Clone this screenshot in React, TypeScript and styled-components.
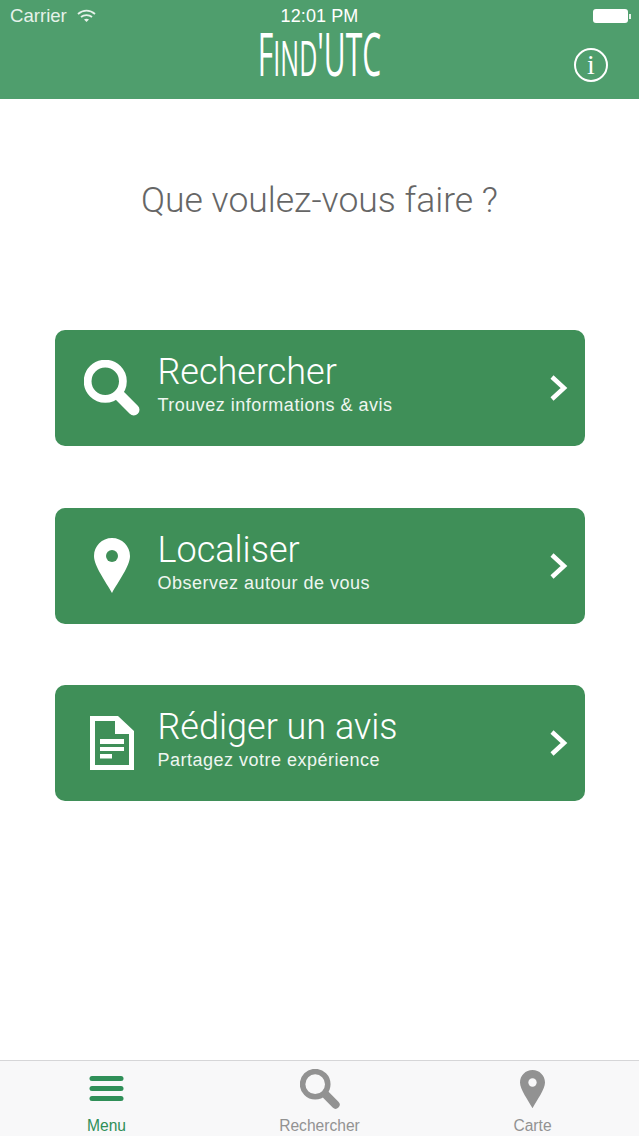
import React from 'react';
import styled, { createGlobalStyle } from 'styled-components';

const GlobalStyle = createGlobalStyle`
  html, body {
    margin: 0;
    padding: 0;
    background: #fff;
    font-family: 'Liberation Sans', Arial, sans-serif;
  }
`;

const Page = styled.div`
  width: 639px;
  height: 1136px;
  display: flex;
  flex-direction: column;
  overflow: hidden;
  background: #fff;
`;

const Header = styled.header`
  height: 99px;
  padding: 0 9px;
  box-sizing: border-box;
  background: #4f9e6d;
  color: #fff;
  position: relative;
`;

const StatusBar = styled.div`
  height: 32px;
  display: grid;
  grid-template-columns: 1fr auto 1fr;
  align-items: center;
`;

const Carrier = styled.div`
  display: flex;
  align-items: center;
  gap: 10px;
  margin-left: 1px;
  color: #e6f2ea;
  font-size: 18.6px;
`;

const Clock = styled.div`
  font-size: 18px;
  letter-spacing: 0.1px;
`;

const Battery = styled.div`
  justify-self: end;
  display: flex;
  align-items: center;
  gap: 1px;
  margin-right: -1px;
`;

const BatteryBody = styled.div`
  width: 35px;
  height: 14px;
  background: #fff;
  border-radius: 3px;
`;

const BatteryTip = styled.div`
  width: 2px;
  height: 5px;
  background: #e6f2ea;
`;

const Logo = styled.div`
  position: absolute;
  left: 0;
  right: 0;
  top: 31px;
  text-align: center;
  font-family: 'Open Sans', sans-serif;
  font-weight: 400;
  font-size: 60px;
  line-height: 44px;
  white-space: nowrap;
  transform: scaleX(0.5);
`;

const LogoSmall = styled.span`
  font-size: 50px;
`;

const InfoButton = styled.div`
  position: absolute;
  right: 31px;
  top: 48px;
  width: 34px;
  height: 34px;
  box-sizing: border-box;
  border: 2px solid #fff;
  border-radius: 50%;
  display: flex;
  align-items: center;
  justify-content: center;
  font-family: 'Liberation Serif', serif;
  font-size: 28px;
`;

const Main = styled.main`
  flex: 1;
  display: flex;
  flex-direction: column;
  align-items: center;
`;

const Question = styled.h1`
  margin: 81px 0 109px;
  height: 41px;
  font-family: Roboto, 'Liberation Sans', sans-serif;
  font-weight: 300;
  font-size: 35.5px;
  line-height: 41px;
  color: #666;
`;

const Buttons = styled.div`
  display: flex;
  flex-direction: column;
  gap: 61.5px;
`;

const MenuButton = styled.div`
  width: 530px;
  height: 116px;
  box-sizing: border-box;
  display: flex;
  align-items: center;
  background: #3f8f58;
  border-radius: 10px;
  color: #fff;
  padding-right: 16px;
`;

const ButtonIcon = styled.div`
  width: 103px;
  flex: none;
  display: flex;
  justify-content: center;
  padding-left: 12px;
  box-sizing: border-box;
`;

const ButtonText = styled.div`
  flex: 1;
  margin-top: -8px;
`;

const ButtonTitle = styled.div`
  font-family: Roboto, 'Liberation Sans', sans-serif;
  font-weight: 300;
  font-size: 36px;
  line-height: 40px;
`;

const ButtonSub = styled.div`
  margin-top: 2px;
  font-size: 18px;
  line-height: 22px;
  letter-spacing: 0.5px;
  color: #eef6f0;
`;

const TabBar = styled.nav`
  height: 76px;
  box-sizing: border-box;
  border-top: 1px solid #d6d6d8;
  background: #f8f8f9;
  display: grid;
  grid-template-columns: 213px 213px 213px;
`;

const Tab = styled.div<{ $active?: boolean }>`
  display: flex;
  flex-direction: column;
  align-items: center;
  color: ${(p) => (p.$active ? '#2f8f58' : '#929292')};
  font-size: 15.6px;
`;

const TabIcon = styled.div`
  height: 56px;
  display: flex;
  align-items: center;
  justify-content: center;
`;

const SearchIcon = ({ size, color }: { size: number; color: string }) => (
  <svg width={size} height={size} viewBox="0 0 54 54">
    <circle cx="20.5" cy="20.5" r="17" fill="none" stroke={color} strokeWidth="7.5" />
    <path d="M35 35 L48 48" stroke={color} strokeWidth="11" strokeLinecap="round" />
  </svg>
);

const PinIcon = ({ width, color, hole }: { width: number; color: string; hole: string }) => (
  <svg width={width} height={width * 1.53} viewBox="0 0 36 55">
    <path d="M18 0 C8 0 0 8 0 18 C0 28 12 44 18 55 C24 44 36 28 36 18 C36 8 28 0 18 0 Z" fill={color} />
    <circle cx="18" cy="18" r="6" fill={hole} />
  </svg>
);

const DocIcon = () => (
  <svg width="44" height="54" viewBox="0 0 44 54">
    <path
      d="M0 0 H28 L44 15 V54 H0 Z M5 5 V49 H39 V18 H25 V5 Z"
      fill="#fff"
      fillRule="evenodd"
    />
    <rect x="10" y="23" width="24" height="5" fill="#fff" />
    <rect x="10" y="31" width="24" height="4" fill="#fff" />
    <rect x="10" y="38" width="12" height="4.5" fill="#fff" />
  </svg>
);

const Chevron = () => (
  <svg width="20" height="28" viewBox="0 0 20 28">
    <path d="M3 3 L15 14 L3 25" fill="none" stroke="#fff" strokeWidth="4.5" />
  </svg>
);

const Wifi = () => (
  <svg width="19" height="14" viewBox="0 0 19 14" fill="none" stroke="#e6f2ea" strokeWidth="1.8">
    <path d="M1 5 C6 0.5 13 0.5 18 5" />
    <path d="M4 8 C7 5.5 12 5.5 15 8" />
    <path d="M9.5 13 L7 10.5 C8.5 9.5 10.5 9.5 12 10.5 Z" fill="#e6f2ea" stroke="none" />
  </svg>
);

const MenuIcon = () => (
  <svg width="36" height="26" viewBox="0 0 36 26" fill="#2f8f58">
    <rect x="0.5" y="0" width="34" height="5" rx="2.5" />
    <rect x="0.5" y="10" width="34" height="5" rx="2.5" />
    <rect x="0.5" y="20" width="34" height="5" rx="2.5" />
  </svg>
);

const actions = [
  { title: 'Rechercher', sub: 'Trouvez informations & avis', icon: <SearchIcon size={56} color="#fff" /> },
  { title: 'Localiser', sub: 'Observez autour de vous', icon: <PinIcon width={36} color="#fff" hole="#3f8f58" /> },
  { title: 'Rédiger un avis', sub: 'Partagez votre expérience', icon: <DocIcon /> },
];

export default function App() {
  return (
    <Page>
      <GlobalStyle />
      <Header>
        <StatusBar>
          <Carrier>
            Carrier <Wifi />
          </Carrier>
          <Clock>12:01 PM</Clock>
          <Battery>
            <BatteryBody />
            <BatteryTip />
          </Battery>
        </StatusBar>
        <Logo>
          F<LogoSmall>IND</LogoSmall>'UTC
        </Logo>
        <InfoButton>i</InfoButton>
      </Header>
      <Main>
        <Question>Que voulez-vous faire ?</Question>
        <Buttons>
          {actions.map((a) => (
            <MenuButton key={a.title}>
              <ButtonIcon>{a.icon}</ButtonIcon>
              <ButtonText>
                <ButtonTitle>{a.title}</ButtonTitle>
                <ButtonSub>{a.sub}</ButtonSub>
              </ButtonText>
              <Chevron />
            </MenuButton>
          ))}
        </Buttons>
      </Main>
      <TabBar>
        <Tab $active>
          <TabIcon>
            <MenuIcon />
          </TabIcon>
          Menu
        </Tab>
        <Tab>
          <TabIcon>
            <SearchIcon size={40} color="#929292" />
          </TabIcon>
          Rechercher
        </Tab>
        <Tab>
          <TabIcon>
            <PinIcon width={25} color="#929292" hole="#f8f8f9" />
          </TabIcon>
          Carte
        </Tab>
      </TabBar>
    </Page>
  );
}
